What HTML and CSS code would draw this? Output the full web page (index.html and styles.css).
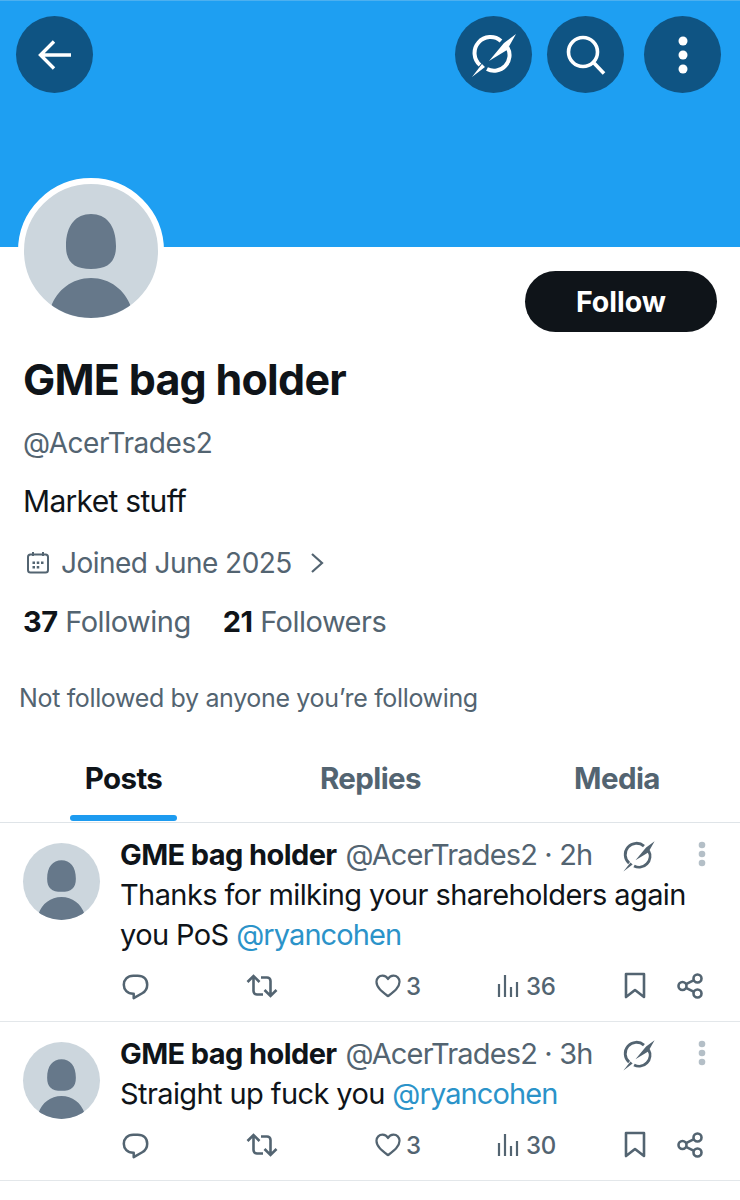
FILE: index.html
```html
<!DOCTYPE html>
<html lang="en">
<head>
    <meta charset="UTF-8">
    <meta name="viewport" content="width=device-width, initial-scale=1.0">
    <title>GME bag holder</title>
    <link rel="stylesheet" href="styles.css">
</head>
<body>

<svg class="defs" width="0" height="0">
    <symbol id="i-slash" viewBox="0 0 48 48">
        <path d="M10 34A15.500 15.500 0 0 1 31 10M37.500 16.500A15.500 15.500 0 0 1 17 38" fill="none" stroke="currentColor" stroke-width="4"/>
        <path d="M46 3L34 12 19 30 37 19zM2 46L12 33l3 3z" fill="currentColor"/>
    </symbol>
    <symbol id="i-reply" viewBox="0 0 30 30">
        <path d="M12.500 3h5C24 3 28 7 28 13c0 4-2 7.500-5.500 9.500L13 28v-5h-.5C6 23 2 18.500 2 13S6 3 12.500 3z" fill="none" stroke="currentColor" stroke-width="2.800" stroke-linejoin="round"/>
    </symbol>
    <symbol id="i-repost" viewBox="0 0 32 24">
        <path d="M1.500 8L7.500 2L13.500 8M7.500 3V17c0 2 1.500 3.500 3.500 3.500H17M30.500 16l-6 6-6-6M24.500 21V7c0-2-1.500-3.500-3.500-3.500H15" fill="none" stroke="currentColor" stroke-width="2.600"/>
    </symbol>
    <symbol id="i-heart" viewBox="0 0 28 26">
        <path d="M14 24C8 19.500 1.500 15 1.500 8.500 1.500 4.500 4.500 1.800 8 1.800c2.500 0 4.800 1.400 6 3.700 1.200-2.300 3.500-3.700 6-3.700 3.500 0 6.500 2.700 6.500 6.700C26.500 15 20 19.500 14 24z" fill="none" stroke="currentColor" stroke-width="2.400" stroke-linejoin="round"/>
    </symbol>
    <symbol id="i-views" viewBox="0 0 22 24">
        <path d="M2 10v13M8 1v22M14 13v10M20 8v15" fill="none" stroke="currentColor" stroke-width="2.200"/>
    </symbol>
    <symbol id="i-bookmark" viewBox="0 0 22 28">
        <path d="M2 2h18v23l-9-7-9 7z" fill="none" stroke="currentColor" stroke-width="2.600" stroke-linejoin="round"/>
    </symbol>
    <symbol id="i-share" viewBox="0 0 26 26">
        <g fill="none" stroke="currentColor" stroke-width="2.600">
            <circle cx="5.500" cy="13" r="4"/>
            <circle cx="20.500" cy="5.500" r="4"/>
            <circle cx="20.500" cy="20.500" r="4"/>
            <path d="M9 11.200l8-4M9 14.800l8 4"/>
        </g>
    </symbol>
    <symbol id="i-person" viewBox="0 0 134 134">
        <path d="M67 30c15 0 25 11 25 32 0 16-8 23-25 23s-25-7-25-23c0-21 10-32 25-32zM27 123c6-17 21-29 40-29s34 12 40 29c-10 7-24 11-40 11s-30-4-40-11z" fill="currentColor"/>
    </symbol>
</svg>

<header class="banner">
    <button class="round-btn">
        <svg width="36" height="36" viewBox="0 0 36 36"><path d="M34 18H4M17 4.500L3.500 18 17 31.500" fill="none" stroke="currentColor" stroke-width="3.400"/></svg>
    </button>
    <div class="banner-right">
        <button class="round-btn"><svg width="48" height="48"><use href="#i-slash"/></svg></button>
        <button class="round-btn">
            <svg width="42" height="42" viewBox="0 0 42 42"><circle cx="18" cy="18" r="14.500" fill="none" stroke="currentColor" stroke-width="3.600"/><path d="M28.500 28.500L39 39.500" stroke="currentColor" stroke-width="3.600"/></svg>
        </button>
        <button class="round-btn">
            <svg width="10" height="38" viewBox="0 0 10 38"><circle cx="5" cy="5" r="4.500" fill="currentColor"/><circle cx="5" cy="19" r="4.500" fill="currentColor"/><circle cx="5" cy="33" r="4.500" fill="currentColor"/></svg>
        </button>
    </div>
</header>

<section class="profile">
    <div class="profile-top">
        <div class="avatar avatar-big"><svg width="134" height="134"><use href="#i-person"/></svg></div>
        <button class="follow-btn">Follow</button>
    </div>
    <h1 class="display-name">GME bag holder</h1>
    <p class="handle">@AcerTrades2</p>
    <p class="bio">Market stuff</p>
    <div class="joined">
        <svg width="24" height="24" viewBox="0 0 24 24"><rect x="2" y="3.500" width="20" height="18" rx="2.500" fill="none" stroke="currentColor" stroke-width="2"/><path d="M7 1v4M17 1v4" stroke="currentColor" stroke-width="2"/><path d="M6.500 10.500h2.500v2.500H6.500zM10.750 10.500h2.500v2.500h-2.500zM15 10.500h2.500v2.500H15zM6.500 15h2.500v2.500H6.500zM10.750 15h2.500v2.500h-2.500z" fill="currentColor"/></svg>
        <span>Joined June 2025</span>
        <svg class="chevron" width="14" height="22" viewBox="0 0 14 22"><path d="M2 2l10 9-10 9" fill="none" stroke="currentColor" stroke-width="2.200"/></svg>
    </div>
    <div class="counts">
        <span><b>37</b> Following</span>
        <span><b>21</b> Followers</span>
    </div>
    <p class="not-followed">Not followed by anyone you’re following</p>
</section>

<nav class="tabs">
    <div class="tab tab-active">Posts<i class="tab-line"></i></div>
    <div class="tab">Replies</div>
    <div class="tab">Media</div>
</nav>

<article class="post">
    <div class="avatar avatar-small"><svg width="77" height="77"><use href="#i-person"/></svg></div>
    <div class="post-body">
        <div class="post-head">
            <b class="post-name">GME bag holder</b>
            <span class="post-meta">@AcerTrades2 · 2h</span>
            <svg class="post-slash" width="34" height="34"><use href="#i-slash"/></svg>
            <svg class="post-kebab" width="8" height="26" viewBox="0 0 8 26"><circle cx="4" cy="4" r="3.300"/><circle cx="4" cy="13" r="3.300"/><circle cx="4" cy="22" r="3.300"/></svg>
        </div>
        <p class="post-text">Thanks for milking your shareholders again you PoS <a href="#">@ryancohen</a></p>
        <div class="post-actions">
            <svg class="reply-icon" width="27" height="27"><use href="#i-reply"/></svg>
            <svg width="32" height="24"><use href="#i-repost"/></svg>
            <span class="action"><svg width="26" height="24"><use href="#i-heart"/></svg>3</span>
            <span class="action action-views"><svg width="22" height="24"><use href="#i-views"/></svg>36</span>
            <svg width="22" height="28"><use href="#i-bookmark"/></svg>
            <svg width="26" height="26"><use href="#i-share"/></svg>
        </div>
    </div>
</article>

<article class="post">
    <div class="avatar avatar-small"><svg width="77" height="77"><use href="#i-person"/></svg></div>
    <div class="post-body">
        <div class="post-head">
            <b class="post-name">GME bag holder</b>
            <span class="post-meta">@AcerTrades2 · 3h</span>
            <svg class="post-slash" width="34" height="34"><use href="#i-slash"/></svg>
            <svg class="post-kebab" width="8" height="26" viewBox="0 0 8 26"><circle cx="4" cy="4" r="3.300"/><circle cx="4" cy="13" r="3.300"/><circle cx="4" cy="22" r="3.300"/></svg>
        </div>
        <p class="post-text">Straight up fuck you <a href="#">@ryancohen</a></p>
        <div class="post-actions">
            <svg class="reply-icon" width="27" height="27"><use href="#i-reply"/></svg>
            <svg width="32" height="24"><use href="#i-repost"/></svg>
            <span class="action"><svg width="26" height="24"><use href="#i-heart"/></svg>3</span>
            <span class="action action-views"><svg width="22" height="24"><use href="#i-views"/></svg>30</span>
            <svg width="22" height="28"><use href="#i-bookmark"/></svg>
            <svg width="26" height="26"><use href="#i-share"/></svg>
        </div>
    </div>
</article>

</body>
</html>
```

FILE: styles.css
```css
body {
    font-family: Inter, "Liberation Sans", sans-serif;
    margin: 0;
    padding: 0;
    height: 1200px;
    overflow: hidden;
    background-color: #fff;
    color: #0f1419;
}
p, h1 {
    margin: 0;
}
.defs {
    position: absolute;
}
.banner {
    height: 247px;
    box-sizing: border-box;
    padding: 16px 19px 0 16px;
    display: flex;
    justify-content: space-between;
    align-items: flex-start;
    background-color: #1e9ff2;
    border-top: 1px solid #4cb0f0;
}
.banner-right {
    display: flex;
    gap: 15px;
}
.banner-right .round-btn:last-child {
    margin-left: 5px;
}
.round-btn {
    width: 77px;
    height: 77px;
    margin-top: -1px;
    padding: 0;
    border: none;
    border-radius: 50%;
    background-color: #0f5483;
    color: #fff;
    display: flex;
    align-items: center;
    justify-content: center;
}
.avatar {
    flex: none;
    border-radius: 50%;
    background-color: #ccd6dd;
    color: #66788a;
    overflow: hidden;
}
.avatar svg {
    display: block;
}
.avatar-big {
    width: 134px;
    height: 134px;
    margin-top: -69px;
    border: 6px solid #fff;
}
.avatar-small {
    width: 77px;
    height: 77px;
}
.profile {
    padding: 0 23px 0 18px;
}
.profile-top {
    display: flex;
    justify-content: space-between;
    align-items: flex-start;
}
.follow-btn {
    width: 192px;
    height: 61px;
    margin-top: 24px;
    padding: 0;
    border: none;
    border-radius: 31px;
    background-color: #0f1419;
    color: #fff;
    font-family: inherit;
    font-size: 28.500px;
    font-weight: 700;
    letter-spacing: 0;
}
.display-name {
    margin: 22px 0 0 5px;
    font-size: 43px;
    line-height: 50px;
    font-weight: 700;
    letter-spacing: -0.75px;
}
.handle {
    margin: 21px 0 0 5px;
    font-size: 28px;
    line-height: 36px;
    letter-spacing: -0.45px;
    color: #536471;
}
.bio {
    margin: 22px 0 0 5px;
    font-size: 30px;
    line-height: 36px;
    letter-spacing: -0.7px;
}
.joined {
    display: flex;
    align-items: center;
    margin: 26px 0 0 8px;
    height: 36px;
    font-size: 28px;
    letter-spacing: -0.55px;
    color: #536471;
}
.joined span {
    margin-left: 11px;
}
.joined .chevron {
    margin-left: 18px;
}
.counts {
    display: flex;
    gap: 32px;
    margin: 23px 0 0 5px;
    font-size: 29px;
    line-height: 36px;
    letter-spacing: -0.5px;
    color: #536471;
}
.counts b {
    color: #0f1419;
}
.not-followed {
    margin: 42px 0 0 1px;
    font-size: 25px;
    line-height: 32px;
    letter-spacing: -0.35px;
    color: #536471;
}
.tabs {
    display: grid;
    grid-template-columns: 247px 247px 246px;
    height: 78px;
    margin-top: 31px;
    box-sizing: border-box;
    border-bottom: 1px solid #dfe4e8;
    color: #536471;
    font-size: 29.500px;
    font-weight: 700;
    letter-spacing: -0.6px;
}
.tab {
    position: relative;
    text-align: center;
    line-height: 36px;
    padding-top: 15px;
}
.tab-active {
    color: #0f1419;
}
.tab-line {
    position: absolute;
    left: 70px;
    bottom: 1px;
    width: 107px;
    height: 6px;
    border-radius: 3px;
    background-color: #1d9bf0;
}
.post {
    display: flex;
    gap: 20px;
    padding: 20px 23px 0 23px;
    box-sizing: border-box;
    border-bottom: 1px solid #e3e7ea;
}
.post-body {
    flex: 1;
    min-width: 0;
}
.post-head {
    display: flex;
    align-items: center;
    height: 28px;
    margin-top: -3px;
    white-space: nowrap;
    font-size: 29px;
    letter-spacing: -0.85px;
}
.post-name {
    letter-spacing: -0.6px;
}
.post-meta {
    margin-left: 9px;
    color: #536471;
}
.post-slash {
    margin-left: auto;
    margin-top: 4px;
    color: #536471;
}
.post-kebab {
    margin-left: 42px;
    margin-right: 11px;
    fill: #b4bfc7;
}
.post-text {
    margin-top: 7px;
    font-size: 29px;
    line-height: 40px;
    letter-spacing: -0.6px;
}
.post-text a {
    color: #2b93c9;
    text-decoration: none;
    letter-spacing: -0.9px;
}
.post-actions {
    display: grid;
    grid-template-columns: 126px 129px 122px 127px 53px 26px;
    align-items: center;
    height: 40px;
    margin-top: 11px;
    padding-bottom: 15px;
    color: #536471;
}
.reply-icon {
    margin-left: 2px;
}
.action {
    display: flex;
    align-items: center;
    gap: 5px;
    font-size: 24px;
    font-weight: 500;
    letter-spacing: -0.4px;
}
.action-views {
    gap: 7px;
}
```
